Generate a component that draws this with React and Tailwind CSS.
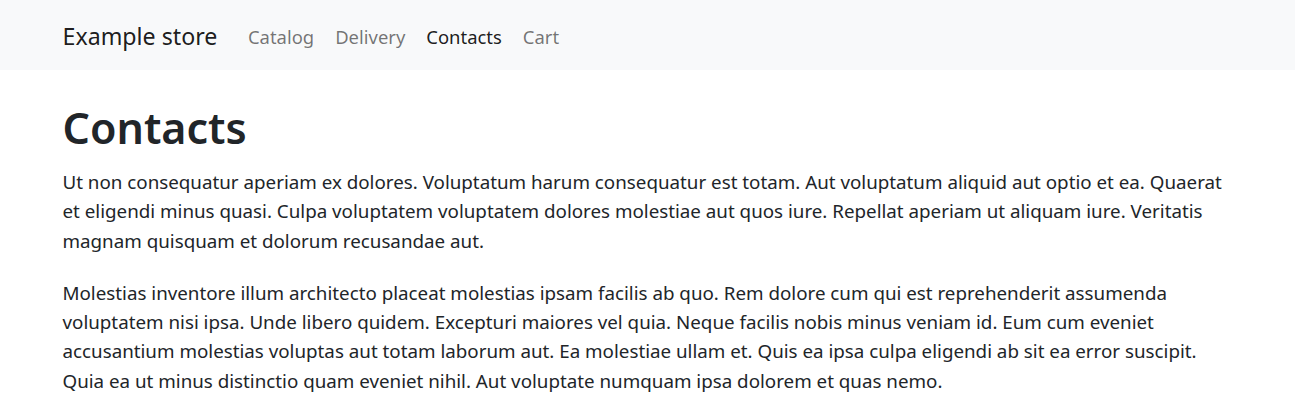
const NAV_LINKS = [
  { label: "Catalog", active: false },
  { label: "Delivery", active: false },
  { label: "Contacts", active: true },
  { label: "Cart", active: false },
];

const PARAGRAPHS = [
  "Ut non consequatur aperiam ex dolores. Voluptatum harum consequatur est totam. Aut voluptatum aliquid aut optio et ea. Quaerat et eligendi minus quasi. Culpa voluptatem voluptatem dolores molestiae aut quos iure. Repellat aperiam ut aliquam iure. Veritatis magnam quisquam et dolorum recusandae aut.",
  "Molestias inventore illum architecto placeat molestias ipsam facilis ab quo. Rem dolore cum qui est reprehenderit assumenda voluptatem nisi ipsa. Unde libero quidem. Excepturi maiores vel quia. Neque facilis nobis minus veniam id. Eum cum eveniet accusantium molestias voluptas aut totam laborum aut. Ea molestiae ullam et. Quis ea ipsa culpa eligendi ab sit ea error suscipit. Quia ea ut minus distinctio quam eveniet nihil. Aut voluptate numquam ipsa dolorem et quas nemo.",
];

export default function App() {
  return (
    <div className="min-h-screen bg-white font-['Noto_Sans',sans-serif] text-[#212529]">
      <nav className="h-[70px] bg-[#f8f9fa]">
        <div className="mx-auto flex h-full w-[1200px] items-center px-[15px] pt-[3px]">
          <a href="#" className="mr-[20px] text-[23.2px] text-black/90">
            Example store
          </a>
          <ul className="flex">
            {NAV_LINKS.map((link) => (
              <li key={link.label}>
                <a
                  href="#"
                  className={`block px-[10.5px] text-[18.45px] ${
                    link.active ? "text-black/90" : "text-black/55"
                  }`}
                >
                  {link.label}
                </a>
              </li>
            ))}
          </ul>
        </div>
      </nav>

      <main className="mx-auto w-[1200px] px-[15px] pt-[30px]">
        <h1 className="mb-[12px] text-[43px] font-semibold leading-[56px]">
          Contacts
        </h1>
        {PARAGRAPHS.map((text, i) => (
          <p key={i} className="mb-[23px] text-[18.78px] leading-[29.3px]">
            {text}
          </p>
        ))}
      </main>
    </div>
  );
}
